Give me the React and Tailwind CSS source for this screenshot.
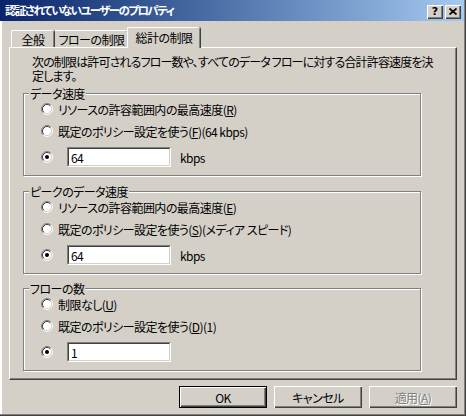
import React from "react";

const Radio = ({ checked }) => (
  <svg width="12" height="12" viewBox="0 0 12 12" className="shrink-0">
    <circle cx="6" cy="6" r="4.5" fill="#fff" />
    <path d="M2.11 9.89A5.5 5.5 0 0 1 9.89 2.11" stroke="#808080" fill="none" />
    <path d="M9.89 2.11A5.5 5.5 0 0 1 2.11 9.89" stroke="#fff" fill="none" />
    <path d="M2.82 9.18A4.5 4.5 0 0 1 9.18 2.82" stroke="#404040" fill="none" />
    <path d="M9.18 2.82A4.5 4.5 0 0 1 2.82 9.18" stroke="#d4d0c8" fill="none" />
    {checked && <circle cx="6" cy="6" r="2" fill="#000" />}
  </svg>
);

const Key = ({ k }) => <span className="underline underline-offset-[1px]">{k}</span>;

const Edit = ({ value }) => (
  <div className="w-[104px] h-[20px] border border-t-[#808080] border-l-[#808080] border-r-white border-b-white">
    <div className="h-full bg-white border border-t-[#404040] border-l-[#404040] border-r-[#d4d0c8] border-b-[#d4d0c8] pl-[2px] flex items-center">
      {value}
    </div>
  </div>
);

const Group = ({ label, className, children }) => (
  <div
    className={`relative ml-[13px] w-[398px] h-[83px] border border-[#808080] shadow-[inset_1px_1px_0_#fff,1px_1px_0_#fff] pt-[5px] ${className}`}
  >
    <span className="absolute left-[5px] top-[-7px] px-[1px] bg-[#d4d0c8] leading-[13px]">{label}</span>
    {children}
  </div>
);

const Row = ({ checked, children, className = "" }) => (
  <div className={`h-[20px] flex items-center pl-[17px] ${className}`}>
    <Radio checked={checked} />
    {children}
  </div>
);

const RateGroup = ({ label, first, second, k1, k2, className }) => (
  <Group label={label} className={className}>
    <Row>
      <span className="ml-[5px]">
        {first}(<Key k={k1} />)
      </span>
    </Row>
    <Row className="mt-[2px]">
      <span className="ml-[5px]">
        既定のポリシー設定を使う(<Key k={k2} />){second}
      </span>
    </Row>
    <Row checked className="mt-[6px]">
      <div className="ml-[14px]">
        <Edit value="64" />
      </div>
      <span className="ml-[9px]">kbps</span>
    </Row>
  </Group>
);

const Button = ({ children, primary, disabled }) => (
  <div
    className={`w-[88px] h-[22px] flex items-center justify-center ${
      primary
        ? "border border-black shadow-[inset_1px_1px_0_#fff,inset_-1px_-1px_0_#404040,inset_-2px_-2px_0_#808080]"
        : "shadow-[inset_1px_1px_0_#fff,inset_-1px_-1px_0_#404040,inset_-2px_-2px_0_#808080]"
    } ${disabled ? "text-[#808080] [text-shadow:1px_1px_0_#fff]" : ""}`}
  >
    {children}
  </div>
);

export default function App() {
  return (
    <div className="w-[466px] h-[416px] overflow-hidden bg-[#d4d0c8] text-black text-[12px] leading-[13px] font-['Noto_Sans_CJK_JP',sans-serif] [font-feature-settings:'palt'] tracking-[-0.55px] shadow-[inset_-1px_-1px_0_#404040,inset_-2px_-2px_0_#808080,inset_2px_0_0_#fff] flex flex-col">
      {/* title bar */}
      <div className="w-[464px] h-[21px] shrink-0 flex items-center bg-gradient-to-r from-[#0a246a] to-[#a6caf0]">
        <span className="ml-[5px] text-white font-bold text-[11.5px] tracking-[-1.6px]">認証されていないユーザーのプロパティ</span>
        <div className="ml-auto mr-[3px] flex gap-[2px] self-start mt-[5px]">
          <div className="w-[16px] h-[14px] bg-[#d4d0c8] shadow-[inset_1px_1px_0_#fff,inset_-1px_-1px_0_#404040,inset_-2px_-2px_0_#808080] flex items-center justify-center text-[11px] font-bold font-['DejaVu_Sans',sans-serif] leading-none tracking-normal pb-[1px]">
            ?
          </div>
          <div className="w-[16px] h-[14px] bg-[#d4d0c8] shadow-[inset_1px_1px_0_#fff,inset_-1px_-1px_0_#404040,inset_-2px_-2px_0_#808080] flex items-center justify-center pb-[1px]">
            <svg width="8" height="7" viewBox="0 0 8 7">
              <path d="M0.5 0.5L7.5 6.5M7.5 0.5L0.5 6.5" stroke="#000" strokeWidth="1.7" />
            </svg>
          </div>
        </div>
      </div>

      {/* tabs */}
      <div className="mt-[6px] h-[20px] flex items-end pl-[11px] shrink-0">
        <div className="w-[43px] h-[17px] border-t border-l border-white rounded-tl-[2px] rounded-tr-[2px] shadow-[inset_-1px_0_0_#808080,1px_0_0_#404040] flex items-center justify-center pt-[1px]">
          全般
        </div>
        <div className="ml-[1px] w-[73px] h-[17px] border-t border-white rounded-tr-[2px] shadow-[inset_-1px_0_0_#808080,1px_0_0_#404040] flex items-center justify-center pt-[1px]">
          フローの制限
        </div>
        <div className="relative z-10 ml-[-1px] mb-[-1px] w-[73px] h-[21px] bg-[#d4d0c8] border-t border-l border-white rounded-tl-[2px] rounded-tr-[2px] shadow-[inset_-1px_0_0_#808080,1px_0_0_#404040] flex items-start justify-center pt-[3px]">
          総計の制限
        </div>
      </div>

      {/* panel */}
      <div className="ml-[9px] w-[448px] h-[333px] shrink-0 border-t border-l border-white border-r border-b border-r-[#404040] border-b-[#404040] shadow-[inset_-1px_-1px_0_#808080] pt-[7px]">
        <p className="pl-[22px] leading-[14px] tracking-[-0.85px]">
          次の制限は許可されるフロー数や、すべてのデータ フローに対する合計許容速度を決
          <br />
          定します。
        </p>

        <RateGroup
          className="mt-[10px]"
          label="データ速度"
          first="リソースの許容範囲内の最高速度"
          k1="R"
          k2="F"
          second="(64 kbps)"
        />
        <RateGroup
          className="mt-[15px]"
          label="ピークのデータ速度"
          first="リソースの許容範囲内の最高速度"
          k1="E"
          k2="S"
          second="(メディア スピード)"
        />

        <Group label="フローの数" className="mt-[14px]">
          <Row>
            <span className="ml-[5px]">
              制限なし(<Key k="U" />)
            </span>
          </Row>
          <Row className="mt-[2px]">
            <span className="ml-[5px]">
              既定のポリシー設定を使う(<Key k="D" />)(1)
            </span>
          </Row>
          <Row checked className="mt-[6px]">
            <div className="ml-[14px]">
              <Edit value="1" />
            </div>
          </Row>
        </Group>
      </div>

      {/* buttons */}
      <div className="mt-[6px] flex justify-end gap-[7px] pr-[9px]">
        <Button primary>OK</Button>
        <Button>キャンセル</Button>
        <Button disabled>
          適用(<Key k="A" />)
        </Button>
      </div>
    </div>
  );
}
